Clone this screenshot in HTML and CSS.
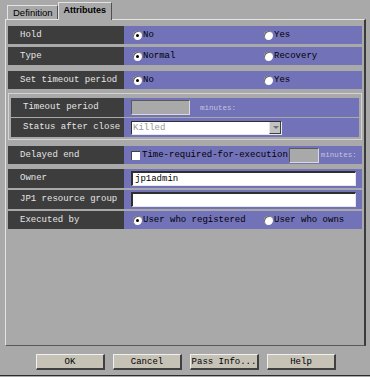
FILE: index.html
```html
<!DOCTYPE html>
<html lang="en">
<head>
    <meta charset="UTF-8">
    <title>Attributes</title>
    <link rel="stylesheet" href="styles.css">
</head>
<body>
    <div class="window">
        <div class="tabs">
            <div class="tab">Definition</div>
            <div class="tab active">Attributes</div>
        </div>

        <div class="panel">
            <div class="row">
                <div class="label">Hold</div>
                <div class="value">
                    <span class="opt"><span class="radio on"></span>No</span>
                    <span class="opt"><span class="radio"></span>Yes</span>
                </div>
            </div>
            <div class="row gap3">
                <div class="label">Type</div>
                <div class="value">
                    <span class="opt"><span class="radio on"></span>Normal</span>
                    <span class="opt"><span class="radio"></span>Recovery</span>
                </div>
            </div>
            <div class="row gap6">
                <div class="label">Set timeout period</div>
                <div class="value">
                    <span class="opt"><span class="radio on"></span>No</span>
                    <span class="opt"><span class="radio"></span>Yes</span>
                </div>
            </div>

            <div class="group">
                <div class="row tall">
                    <div class="label">Timeout period</div>
                    <div class="value">
                        <span class="field small disabled"></span>
                        <span class="unit">minutes:</span>
                    </div>
                </div>
                <div class="row tall gap1">
                    <div class="label">Status after close</div>
                    <div class="value">
                        <span class="select">
                            <span class="select-text">Killed</span>
                            <span class="select-btn"></span>
                        </span>
                    </div>
                </div>
            </div>

            <div class="row gap6">
                <div class="label">Delayed end</div>
                <div class="value">
                    <span class="check"></span>
                    <span class="check-text">Time-required-for-execution</span>
                    <span class="field tiny disabled"></span>
                    <span class="unit">minutes:</span>
                </div>
            </div>
            <div class="row tall gap5">
                <div class="label">Owner</div>
                <div class="value">
                    <span class="field wide">jp1admin</span>
                </div>
            </div>
            <div class="row tall gap2">
                <div class="label">JP1 resource group</div>
                <div class="value">
                    <span class="field wide"></span>
                </div>
            </div>
            <div class="row gap2">
                <div class="label">Executed by</div>
                <div class="value">
                    <span class="opt"><span class="radio on"></span>User who registered</span>
                    <span class="opt"><span class="radio"></span>User who owns</span>
                </div>
            </div>
        </div>

        <div class="buttons">
            <button class="btn">OK</button>
            <button class="btn">Cancel</button>
            <button class="btn">Pass Info...</button>
            <button class="btn">Help</button>
        </div>
    </div>
</body>
</html>
```

FILE: styles.css
```css
body {
    margin: 0;
    background: #a9a9a9;
    font-family: "Liberation Mono", "DejaVu Sans Mono", monospace;
    font-size: 9px;
    width: 370px;
    height: 377px;
    overflow: hidden;
}
.window {
    height: 376px;
    border-bottom: 1px solid #2c2c2c;
    box-sizing: border-box;
}
.tabs {
    display: flex;
    align-items: flex-end;
    height: 19px;
    padding-left: 7px;
}
.tab {
    font-family: "Liberation Sans", Arial, sans-serif;
    font-size: 9.5px;
    color: #000;
    height: 14px;
    line-height: 14px;
    padding: 0 4px 0 5px;
    border-left: 1px solid #e4e4e4;
    border-top: 1px solid #e4e4e4;
    border-right: 1px solid #505050;
    box-sizing: border-box;
}
.tab.active {
    font-size: 9px;
    font-weight: bold;
    height: 18px;
    line-height: 15px;
    margin-bottom: -1px;
    padding: 0 5px;
    background: #a9a9a9;
    position: relative;
}
.panel {
    margin-left: 5px;
    width: 361px;
    height: 327px;
    box-sizing: border-box;
    border-left: 1px solid #e4e4e4;
    border-top: 1px solid #e4e4e4;
    border-right: 2px solid #3a3a3a;
    border-bottom: 1px solid #5a5a5a;
    padding: 6px 2px 0 2px;
}
.row {
    display: grid;
    grid-template-columns: 116px 238px;
    height: 18px;
}
.row.tall {
    height: 19px;
}
.gap1 { margin-top: 1px; }
.gap2 { margin-top: 2px; }
.gap3 { margin-top: 3px; }
.gap5 { margin-top: 5px; }
.gap6 { margin-top: 6px; }
.label {
    background: #3d3d3d;
    color: #e6e6e6;
    padding-left: 12px;
    line-height: 18px;
    white-space: nowrap;
    overflow: hidden;
}
.row.tall .label {
    line-height: 19px;
}
.value {
    background: #7272b8;
    display: flex;
    align-items: center;
    padding-left: 9px;
    color: #000;
    white-space: nowrap;
    min-width: 0;
    overflow: hidden;
}
.opt {
    display: flex;
    align-items: center;
    width: 131px;
    flex: none;
}
.opt:last-child {
    width: auto;
}
.radio {
    width: 9px;
    height: 9px;
    border-radius: 50%;
    background: #fff;
    box-shadow: inset 1px 1px 0 #6a6a6a;
    margin-right: 1px;
    position: relative;
    flex: none;
}
.radio.on::after {
    content: "";
    position: absolute;
    left: 3px;
    top: 3px;
    width: 3px;
    height: 3px;
    border-radius: 50%;
    background: #000;
}
.group {
    margin-top: 4px;
    border: 1px solid #d4d4d4;
    padding: 4px 2px 2px 2px;
}
.group .row {
    grid-template-columns: 113px 235px;
}
.field {
    display: block;
    height: 15px;
    box-sizing: border-box;
    background: #fff;
    border-top: 2px solid #2e2e2e;
    border-left: 2px solid #2e2e2e;
    border-right: 1px solid #e8e8e8;
    border-bottom: 1px solid #e8e8e8;
    line-height: 12px;
    padding-left: 2px;
    flex: none;
}
.field.disabled {
    background: #a9a9a9;
    border-top: 1px solid #5a5a5a;
    border-left: 1px solid #5a5a5a;
    border-right: 1px solid #dadada;
    border-bottom: 1px solid #dadada;
}
.field.small {
    width: 59px;
    margin-left: -2px;
}
.field.tiny {
    width: 30px;
}
.field.wide {
    width: 225px;
    margin-left: -2px;
}
.unit {
    color: #c4c4dc;
    font-size: 7.5px;
    margin-left: 10px;
}
.field.tiny + .unit {
    margin-left: 2px;
}
.select {
    display: flex;
    width: 151px;
    height: 14px;
    margin-left: -2px;
    box-sizing: border-box;
    background: #fff;
    border-top: 1px solid #2e2e2e;
    border-left: 1px solid #2e2e2e;
    border-right: 1px solid #e8e8e8;
    border-bottom: 1px solid #e8e8e8;
}
.select-text {
    flex: 1;
    color: #9a9a9a;
    line-height: 12px;
    padding-left: 1px;
}
.select-btn {
    width: 12px;
    background: #c2c2c2;
    border-left: 1px solid #e8e8e8;
    border-right: 1px solid #404040;
    border-bottom: 1px solid #404040;
    box-sizing: border-box;
    position: relative;
}
.select-btn::after {
    content: "";
    position: absolute;
    left: 3px;
    top: 4px;
    border-left: 3px solid transparent;
    border-right: 3px solid transparent;
    border-top: 3px solid #707070;
}
.check {
    width: 9px;
    height: 9px;
    background: #fff;
    box-sizing: border-box;
    border-top: 1px solid #404040;
    border-left: 1px solid #404040;
    margin-left: -2px;
    margin-right: 2px;
    flex: none;
}
.check-text {
    margin-right: 1px;
}
.buttons {
    display: flex;
    gap: 8px;
    padding-left: 36px;
    margin-top: 8px;
}
.btn {
    width: 69px;
    height: 16px;
    padding: 0;
    font-family: "Liberation Mono", "DejaVu Sans Mono", monospace;
    font-size: 9px;
    color: #000;
    background: #c6c2b6;
    border-top: 1px solid #f0f0f0;
    border-left: 1px solid #f0f0f0;
    border-right: 2px solid #404040;
    border-bottom: 2px solid #404040;
    box-sizing: border-box;
}
```
